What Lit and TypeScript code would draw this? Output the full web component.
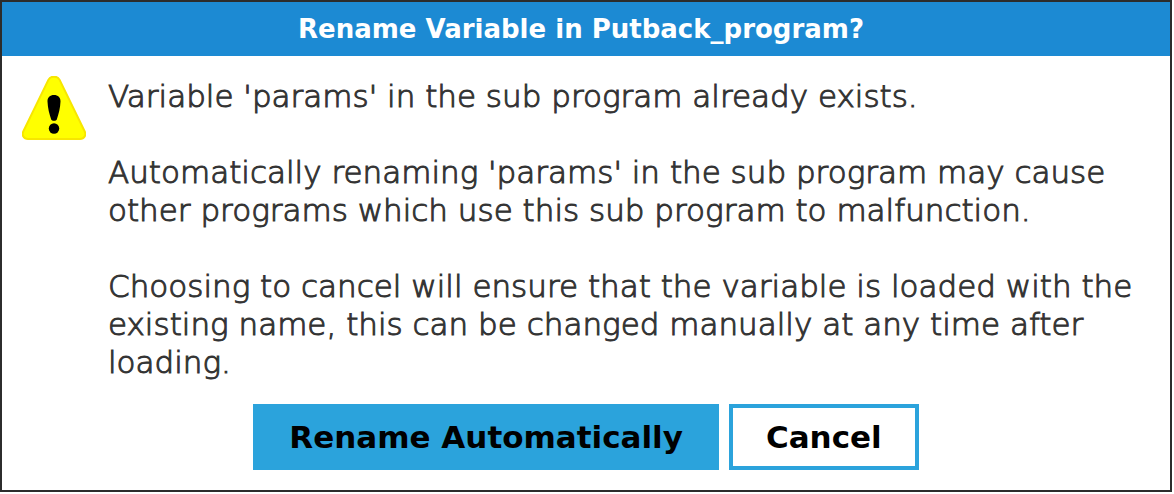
import { LitElement, html, css } from "lit";
import { customElement } from "lit/decorators.js";

@customElement("app-root")
export class AppRoot extends LitElement {
  static styles = css`
    :host {
      display: block;
      font-family: "DejaVu Sans", sans-serif;
      color: #222;
    }
    * {
      box-sizing: border-box;
    }
    .dialog {
      margin: 0 2px 2px 0;
      border: 2px solid #2c2c2c;
      background: #fff;
    }
    .title {
      margin: 0;
      padding-right: 10px;
      background: #1c8ad3;
      color: #fff;
      font-size: 26px;
      line-height: 54px;
      font-weight: 700;
      text-align: center;
    }
    .body {
      display: grid;
      grid-template-columns: 64px 1fr;
      column-gap: 22px;
      padding: 20px 20px 0;
    }
    .icon {
      width: 64px;
      height: 64px;
    }
    .message {
      padding-top: 1px;
      color: #333;
      font-size: 31px;
      line-height: 38px;
      font-weight: 200;
      -webkit-text-stroke: 1px #333;
    }
    p {
      margin: 0 0 38px;
    }
    p:last-child {
      margin: 0;
    }
    .actions {
      display: flex;
      justify-content: center;
      gap: 10px;
      padding: 23px 0 20px;
    }
    button {
      height: 66px;
      padding: 0 33px;
      border: 4px solid #2ba3dc;
      border-radius: 0;
      background: #fff;
      color: #000;
      font: 700 31px "DejaVu Sans", sans-serif;
    }
    .primary {
      padding: 0 32px;
      background: #2ba3dc;
    }
  `;

  render() {
    return html`
      <section class="dialog" role="alertdialog" aria-labelledby="title" aria-describedby="message">
        <h1 class="title" id="title">Rename Variable in Putback_program?</h1>
        <div class="body">
          <svg class="icon" viewBox="0 0 64 64" aria-hidden="true">
            <path
              d="M26.5 3.6C28.6-.3 35.4-.3 37.5 3.6L62.5 55C64.500 59 62.400 63 58 63H6C1.600 63-.5 59 1.500 55Z"
              fill="#ff0"
              stroke="#f7e600"
              stroke-width="2"
            />
            <path
              d="M25.500 25.500C25.300 21.500 28 19 32 19S38.700 21.500 38.500 25.500C38.300 32 36.600 38 34.800 43.500C34.300 45.300 29.700 45.300 29.200 43.500C27.400 38 25.700 32 25.500 25.500Z"
              fill="#000"
            />
            <circle cx="32" cy="52.500" r="5.200" fill="#000" />
          </svg>
          <div class="message" id="message">
            <p>Variable 'params' in the sub program already exists.</p>
            <p>Automatically renaming 'params' in the sub program may cause<br />other programs which use this sub program to malfunction.</p>
            <p>Choosing to cancel will ensure that the variable is loaded with the<br />existing name, this can be changed manually at any time after<br />loading.</p>
          </div>
        </div>
        <div class="actions">
          <button class="primary" type="button">Rename Automatically</button>
          <button type="button">Cancel</button>
        </div>
      </section>
    `;
  }
}
